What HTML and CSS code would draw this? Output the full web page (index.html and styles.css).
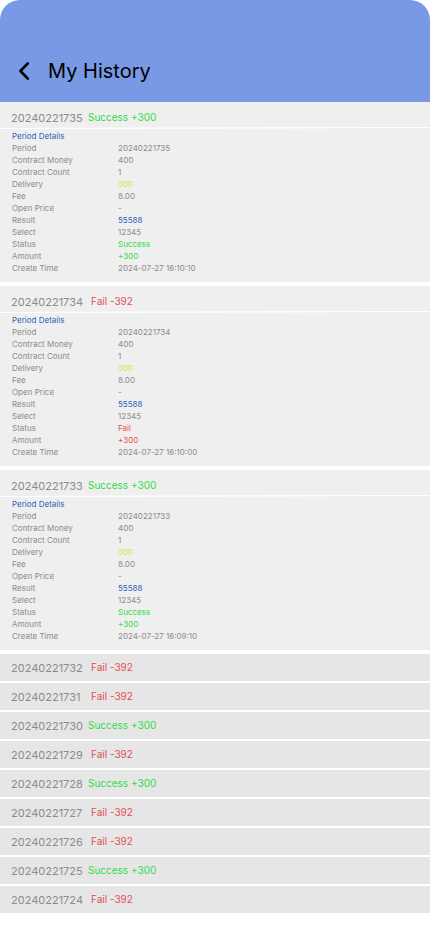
FILE: index.html
```html
<!DOCTYPE html>
<html lang="en">
<head>
<meta charset="utf-8">
<meta name="viewport" content="width=device-width, initial-scale=1">
<title>My History</title>
<link rel="stylesheet" href="styles.css">
</head>
<body>
<header class="topbar">
  <button class="back" type="button" aria-label="Back">
    <svg width="12" height="20" viewBox="0 0 12 20" fill="none" stroke="#000" stroke-width="2.7" stroke-linecap="round" stroke-linejoin="round"><path d="M9.8 2.4 2.4 10 9.8 17.6"/></svg>
  </button>
  <h1 class="title">My History</h1>
</header>
<main class="history">
  <details class="record" open>
    <summary class="head"><span class="id">20240221735</span><span class="outcome success">Success +300</span></summary>
    <svg class="rule" viewBox="0 0 430 2" preserveAspectRatio="none"><path d="M0 1.5 430 .5" stroke="#fff" stroke-width="1.2"/></svg>
    <div class="body">
      <h2 class="subtitle">Period Details</h2>
      <dl class="fields">
        <dt>Period</dt><dd>20240221735</dd>
        <dt>Contract Money</dt><dd>400</dd>
        <dt>Contract Count</dt><dd>1</dd>
        <dt>Delivery</dt><dd class="delivery">300</dd>
        <dt>Fee</dt><dd>8.00</dd>
        <dt>Open Price</dt><dd>-</dd>
        <dt>Result</dt><dd class="result">55588</dd>
        <dt>Select</dt><dd>12345</dd>
        <dt>Status</dt><dd class="success">Success</dd>
        <dt>Amount</dt><dd class="success">+300</dd>
        <dt>Create Time</dt><dd>2024-07-27 16:10:10</dd>
      </dl>
    </div>
  </details>
  <details class="record" open>
    <summary class="head"><span class="id">20240221734</span><span class="outcome fail">Fail -392</span></summary>
    <svg class="rule" viewBox="0 0 430 2" preserveAspectRatio="none"><path d="M0 1.5 430 .5" stroke="#fff" stroke-width="1.2"/></svg>
    <div class="body">
      <h2 class="subtitle">Period Details</h2>
      <dl class="fields">
        <dt>Period</dt><dd>20240221734</dd>
        <dt>Contract Money</dt><dd>400</dd>
        <dt>Contract Count</dt><dd>1</dd>
        <dt>Delivery</dt><dd class="delivery">300</dd>
        <dt>Fee</dt><dd>8.00</dd>
        <dt>Open Price</dt><dd>-</dd>
        <dt>Result</dt><dd class="result">55588</dd>
        <dt>Select</dt><dd>12345</dd>
        <dt>Status</dt><dd class="fail">Fail</dd>
        <dt>Amount</dt><dd class="fail">+300</dd>
        <dt>Create Time</dt><dd>2024-07-27 16:10:00</dd>
      </dl>
    </div>
  </details>
  <details class="record" open>
    <summary class="head"><span class="id">20240221733</span><span class="outcome success">Success +300</span></summary>
    <svg class="rule" viewBox="0 0 430 2" preserveAspectRatio="none"><path d="M0 1.5 430 .5" stroke="#fff" stroke-width="1.2"/></svg>
    <div class="body">
      <h2 class="subtitle">Period Details</h2>
      <dl class="fields">
        <dt>Period</dt><dd>20240221733</dd>
        <dt>Contract Money</dt><dd>400</dd>
        <dt>Contract Count</dt><dd>1</dd>
        <dt>Delivery</dt><dd class="delivery">300</dd>
        <dt>Fee</dt><dd>8.00</dd>
        <dt>Open Price</dt><dd>-</dd>
        <dt>Result</dt><dd class="result">55588</dd>
        <dt>Select</dt><dd>12345</dd>
        <dt>Status</dt><dd class="success">Success</dd>
        <dt>Amount</dt><dd class="success">+300</dd>
        <dt>Create Time</dt><dd>2024-07-27 16:09:10</dd>
      </dl>
    </div>
  </details>
  <ul class="older">
    <li class="row"><span class="id">20240221732</span><span class="outcome fail">Fail -392</span></li>
    <li class="row"><span class="id">20240221731</span><span class="outcome fail">Fail -392</span></li>
    <li class="row"><span class="id">20240221730</span><span class="outcome success">Success +300</span></li>
    <li class="row"><span class="id">20240221729</span><span class="outcome fail">Fail -392</span></li>
    <li class="row"><span class="id">20240221728</span><span class="outcome success">Success +300</span></li>
    <li class="row"><span class="id">20240221727</span><span class="outcome fail">Fail -392</span></li>
    <li class="row"><span class="id">20240221726</span><span class="outcome fail">Fail -392</span></li>
    <li class="row"><span class="id">20240221725</span><span class="outcome success">Success +300</span></li>
    <li class="row"><span class="id">20240221724</span><span class="outcome fail">Fail -392</span></li>
  </ul>
</main>
</body>
</html>
```
FILE: styles.css
```css
* { box-sizing: border-box; }
body {
  margin: 0;
  background: #fff;
  color: #8b8b8b;
  font-family: Inter, "Liberation Sans", sans-serif;
}
.topbar {
  display: flex;
  align-items: center;
  gap: 12px;
  padding: 56px 12px 16px;
  background: #7999e5;
  border-radius: 20px 20px 0 0;
}
.back {
  display: flex;
  align-items: center;
  justify-content: center;
  width: 24px;
  height: 30px;
  padding: 0;
  border: 0;
  background: none;
  cursor: pointer;
}
.title {
  margin: 0;
  color: #000;
  font-size: 20px;
  font-weight: 400;
  line-height: 30px;
}
.history {
  display: flex;
  flex-direction: column;
  gap: 4px;
}
.record { background: #efefef; }
.head,
.row {
  display: grid;
  grid-template-columns: 77px 1fr;
  padding-left: 11px;
  line-height: 20px;
}
.head {
  padding-top: 6px;
  list-style: none;
  cursor: pointer;
}
.id { font-size: 11px; }
.outcome {
  font-size: 10px;
  line-height: 18px;
}
.outcome.fail { padding-left: 3px; }
.rule {
  display: block;
  width: 100%;
  height: 2px;
  margin-top: -1px;
}
.body {
  padding: 1px 12px 8px;
  font-size: 8px;
  line-height: 12px;
}
.subtitle {
  margin: 0;
  color: #2f62b5;
  font-size: 8px;
  font-weight: 400;
}
.fields {
  display: grid;
  grid-template-columns: 106px 1fr;
  margin: 0;
}
.fields dd { margin: 0; }
.success { color: #2fdc4d; }
.fail { color: #e05252; }
.delivery { color: #e0e04a; }
.fields .result { color: #2f62b5; }
.older {
  display: flex;
  flex-direction: column;
  gap: 2px;
  margin: 0;
  padding: 0;
  list-style: none;
}
.row {
  padding-top: 4px;
  padding-bottom: 3px;
  background: #e6e6e6;
}
```
